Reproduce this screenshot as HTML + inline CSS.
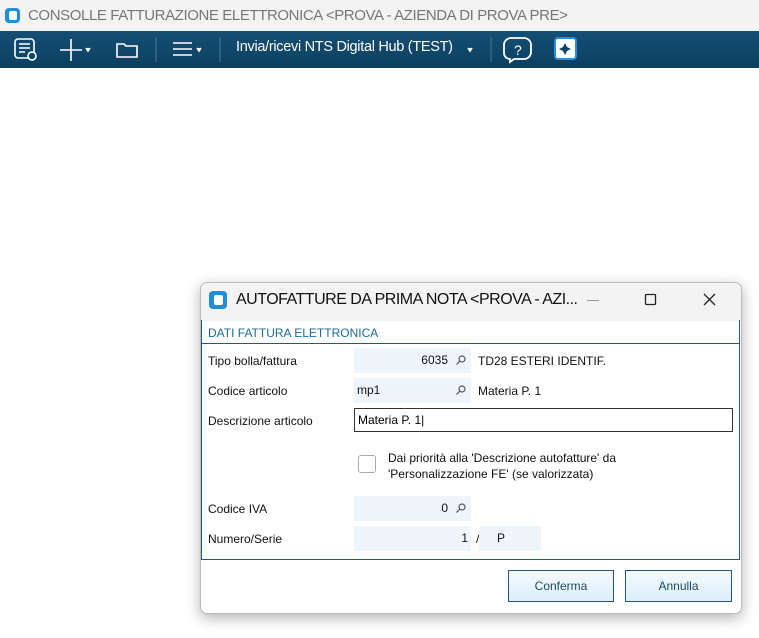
<!DOCTYPE html><html><head><style>
body{margin:0;width:759px;height:638px;background:#fff;font-family:"Liberation Sans",sans-serif;position:relative;overflow:hidden}
.a{position:absolute}
.t{font-size:12px;color:#111}
.f{position:absolute;background:#eef6fc;height:25px;font-size:12px;line-height:25px;color:#111}
</style></head><body>
<div class="a" style="left:0;top:0;width:759px;height:31px;background:#f3f3f3"></div>
<div class="a" style="left:5px;top:8px;width:15px;height:15px;background:#1e8fd8;border-radius:4px"></div>
<div class="a" style="left:9px;top:11px;width:8px;height:9px;background:#fff;border-radius:2px"></div>
<div class="a" style="left:28px;top:7px;font-size:15px;color:#777;letter-spacing:-0.4px">CONSOLLE FATTURAZIONE ELETTRONICA &lt;PROVA - AZIENDA DI PROVA PRE&gt;</div>
<div class="a" style="left:0;top:31px;width:759px;height:37px;background:linear-gradient(#154f74,#0b3f61)"></div>
<svg class="a" style="left:0;top:31px" width="590" height="37" fill="none" stroke="#fff" stroke-width="1.6">
<rect x="15" y="8" width="19" height="19" rx="3"/><path d="M19 13h11M19 17h11M19 21h6"/><circle cx="32" cy="25" r="4" fill="#0d4466"/>
<path d="M71 8v22M60 19h22"/><path d="M86 17l2 3 2-3" fill="#fff"/>
<path d="M117 13h7l2 2h11v11h-20z"/>
<path d="M173 12h19M173 18h19M173 24h19"/><path d="M197 17l2 3 2-3" fill="#fff"/>
<path d="M156 6v25M220 6v25M491 6v25" stroke="#4d7894" stroke-width="1"/>
<path d="M468 17l2 3 2-3" fill="#fff"/>
<path d="M511 7h13a7 7 0 017 7v7a7 7 0 01-7 7h-10l-4 3v-3a6 6 0 01-6-6v-8a7 7 0 017-7z" stroke-width="1.8"/>
<text x="514" y="24" fill="#fff" stroke="none" font-size="14" font-family="Liberation Sans">?</text>
<rect x="555" y="7" width="21" height="21" rx="3" fill="#fff" stroke="#2b8fe0" stroke-width="2"/><path d="M565 12l2 4 4 2-4 2-2 4-2-4-4-2 4-2z" fill="#0d4466" stroke="none"/>
</svg>
<div class="a" style="left:236px;top:39px;font-size:14.5px;color:#fff;letter-spacing:-0.3px">Invia/ricevi NTS Digital Hub (TEST)</div>
<div class="a" style="left:200px;top:282px;width:540px;height:330px;background:#fff;border:1px solid #bbb;border-radius:7px;box-shadow:0 4px 14px rgba(0,0,0,.3);overflow:hidden">
 <div class="a" style="left:0;top:0;width:540px;height:38px;background:#f3f3f3"></div>
</div>
<div class="a" style="left:209px;top:291px;width:18px;height:18px;background:#1e8fd8;border-radius:4px"></div>
<div class="a" style="left:214px;top:295px;width:9px;height:10px;background:#fff;border-radius:2px"></div>
<div class="a" style="left:236px;top:291px;font-size:16px;color:#111;letter-spacing:-0.5px">AUTOFATTURE DA PRIMA NOTA &lt;PROVA - AZI...</div>
<div class="a" style="left:587px;top:300px;width:12px;height:1px;background:#999"></div>
<svg class="a" style="left:640px;top:290px" width="80" height="20" fill="none" stroke="#222" stroke-width="1.3">
<rect x="5.5" y="4.5" width="10" height="10" rx="1"/><path d="M64 4l11 11M75 4l-11 11"/></svg>
<div class="a" style="left:201px;top:320px;width:537px;height:239px;border:1px solid #1e5a80;border-top:none"></div>
<div class="a" style="left:201px;top:343px;width:538px;height:1px;background:#1e5a80"></div>
<div class="a" style="left:208px;top:326px;font-size:12px;color:#1e6a96">DATI FATTURA ELETTRONICA</div>
<div class="a t" style="left:208px;top:354px">Tipo bolla/fattura</div>
<div class="f" style="left:354px;top:348px;width:117px"><span style="position:absolute;right:23px">6035</span></div>
<div class="a t" style="left:478px;top:354px">TD28 ESTERI IDENTIF.</div>
<div class="a t" style="left:208px;top:384px">Codice articolo</div>
<div class="f" style="left:354px;top:378px;width:117px"><span style="position:absolute;left:3px">mp1</span></div>
<div class="a t" style="left:478px;top:384px">Materia P. 1</div>
<div class="a t" style="left:208px;top:414px">Descrizione articolo</div>
<div class="a" style="left:354px;top:408px;width:374px;height:22px;border:1.5px solid #333;font-size:12px;line-height:22px;padding-left:3px">Materia P. 1|</div>
<div class="a" style="left:358px;top:455px;width:16px;height:16px;border:1px solid #aaa;border-radius:3px"></div>
<div class="a t" style="left:388px;top:450px;line-height:16px">Dai priorità alla 'Descrizione autofatture' da<br>'Personalizzazione FE' (se valorizzata)</div>
<div class="a t" style="left:208px;top:502px">Codice IVA</div>
<div class="f" style="left:354px;top:496px;width:117px"><span style="position:absolute;right:23px">0</span></div>
<div class="a t" style="left:208px;top:532px">Numero/Serie</div>
<div class="f" style="left:354px;top:526px;width:117px"><span style="position:absolute;right:3px">1</span></div>
<div class="a t" style="left:476px;top:532px">/</div>
<div class="f" style="left:479px;top:526px;width:62px"><span style="position:absolute;left:18px">P</span></div>
<svg class="a" style="left:0;top:0" width="759" height="638" fill="none" stroke="#555" stroke-width="1.2">
<g id="m"><circle cx="462" cy="359" r="3"/><path d="M460 361l-3.5 3.5"/></g>
<use href="#m" y="30"/><use href="#m" y="148"/></svg>
<div class="a" style="left:508px;top:570px;width:104px;height:30px;border:1px solid #1e5a80;background:linear-gradient(#f4fafe,#ddeefa);font-size:12px;line-height:30px;text-align:center;color:#1e4a6a">Conferma</div>
<div class="a" style="left:625px;top:570px;width:105px;height:30px;border:1px solid #1e5a80;background:linear-gradient(#f4fafe,#ddeefa);font-size:12px;line-height:30px;text-align:center;color:#1e4a6a">Annulla</div>
</body></html>
